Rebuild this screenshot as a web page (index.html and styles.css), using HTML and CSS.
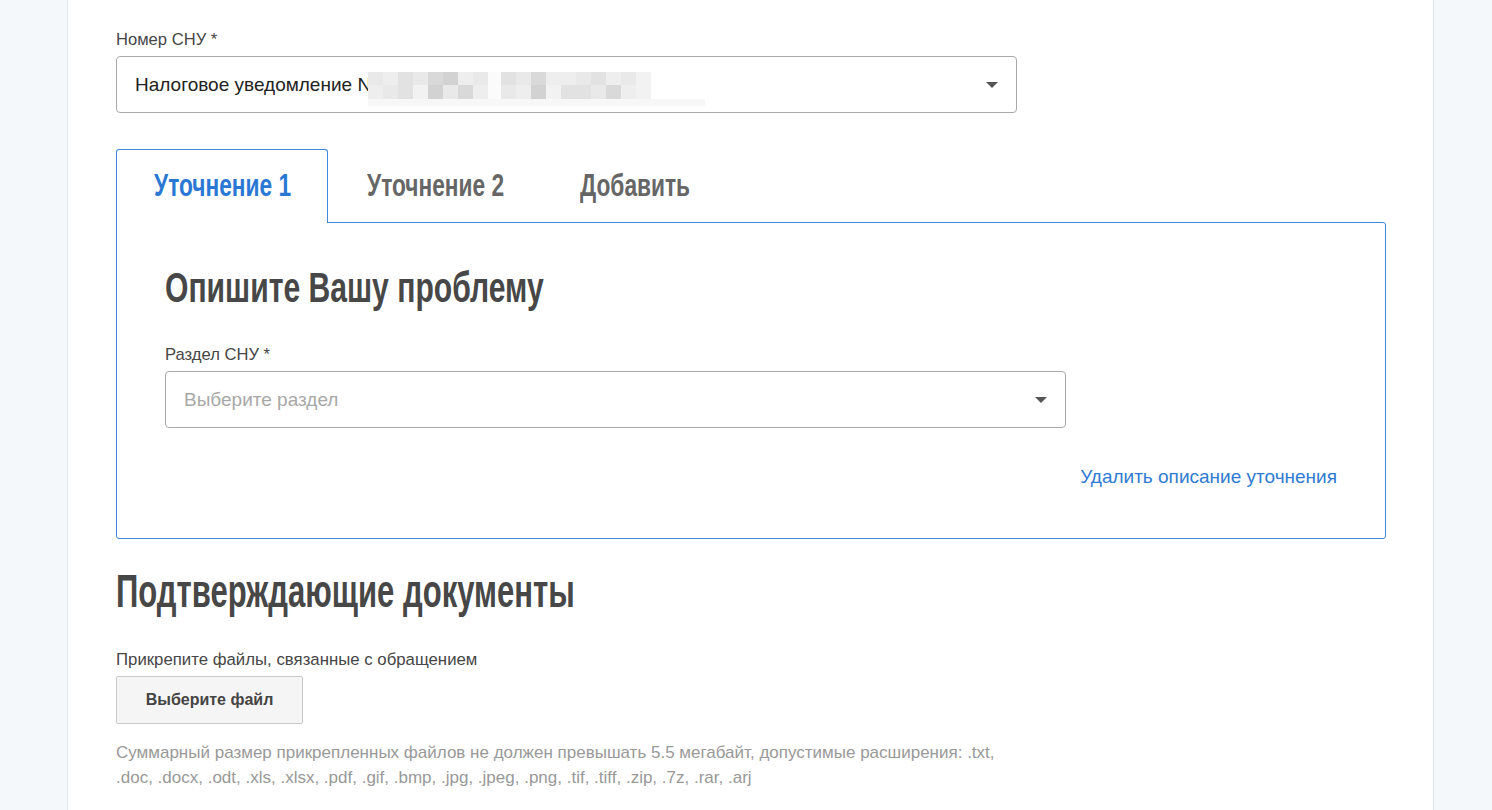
FILE: index.html
```html
<!DOCTYPE html>
<html lang="ru">
<head>
    <meta charset="UTF-8">
    <title>Уточнение СНУ</title>
    <link rel="stylesheet" href="styles.css">
</head>
<body>
    <div class="page">
        <div class="side side-left"></div>
        <div class="content">
            <div class="field">
                <label class="field-label">Номер СНУ *</label>
                <div class="select">
                    <span class="select-value">Налоговое уведомление N</span>
                    <span class="blur">
                        <span class="blur-row">
                            <i class="c1"></i><i class="c2"></i><i class="c3"></i><i class="c1"></i><i class="c4"></i><i class="c5"></i><i class="c2"></i><i class="c1"></i><i class="gap"></i><i class="c3"></i><i class="c1"></i><i class="c4"></i><i class="c2"></i><i class="c2"></i><i class="c1"></i><i class="c3"></i><i class="c2"></i><i class="c1"></i><i class="c6"></i>
                        </span>
                        <span class="blur-row">
                            <i class="c2"></i><i class="c1"></i><i class="c3"></i><i class="c6"></i><i class="c5"></i><i class="c1"></i><i class="c4"></i><i class="c2"></i><i class="gap"></i><i class="c1"></i><i class="c2"></i><i class="c5"></i><i class="c6"></i><i class="c3"></i><i class="c3"></i><i class="c1"></i><i class="c4"></i><i class="c2"></i><i class="c6"></i>
                        </span>
                        <span class="blur-fade"></span>
                    </span>
                    <span class="arrow"></span>
                </div>
            </div>

            <div class="tabs">
                <div class="tab tab-active tab-first"><span class="cond">Уточнение 1</span></div>
                <div class="tab tab-second"><span class="cond">Уточнение 2</span></div>
                <div class="tab tab-add"><span class="cond">Добавить</span></div>
            </div>
            <div class="tab-panel">
                <h2 class="panel-title"><span class="cond">Опишите Вашу проблему</span></h2>
                <div class="field">
                    <label class="field-label">Раздел СНУ *</label>
                    <div class="select">
                        <span class="select-placeholder">Выберите раздел</span>
                        <span class="arrow"></span>
                    </div>
                </div>
                <div class="panel-actions">
                    <a class="link" href="#">Удалить описание уточнения</a>
                </div>
            </div>

            <h2 class="section-title"><span class="cond">Подтверждающие документы</span></h2>
            <div class="upload">
                <div class="upload-label">Прикрепите файлы, связанные с обращением</div>
                <button class="file-button" type="button">Выберите файл</button>
                <p class="hint">Суммарный размер прикрепленных файлов не должен превышать 5.5 мегабайт, допустимые расширения: .txt, .doc, .docx, .odt, .xls, .xlsx, .pdf, .gif, .bmp, .jpg, .jpeg, .png, .tif, .tiff, .zip, .7z, .rar, .arj</p>
            </div>
        </div>
        <div class="side side-right"></div>
    </div>
</body>
</html>
```

FILE: styles.css
```css
body {
    margin: 0;
    padding: 0;
    font-family: "Liberation Sans", Arial, sans-serif;
    color: #333333;
    background-color: #f4f8fb;
}
.page {
    display: flex;
    min-height: 810px;
}
.side {
    background-color: #f4f8fb;
}
.side-left {
    width: 67px;
    border-right: 1px solid #e1e7ec;
}
.side-right {
    width: 58px;
    border-left: 1px solid #e1e7ec;
}
.content {
    flex: 1;
    background-color: #ffffff;
    padding: 30px 47px 0 48px;
}
.cond {
    display: inline-block;
    font-family: "Liberation Sans", Arial, sans-serif;
    font-weight: bold;
    transform: scaleX(0.69);
    transform-origin: left center;
    white-space: nowrap;
}
.field-label {
    display: block;
    font-size: 16.6px;
    line-height: 20px;
    color: #464646;
    margin-bottom: 6px;
}
.select {
    display: flex;
    align-items: center;
    width: 863px;
    height: 55px;
    border: 1px solid #a9a9a9;
    border-radius: 4px;
    padding: 0 18px;
}
.select-value {
    font-size: 19px;
    color: #222222;
    white-space: nowrap;
}
.select-placeholder {
    font-size: 19px;
    color: #a8a8a8;
}
.blur {
    display: flex;
    flex-direction: column;
    margin-left: -3px;
    margin-top: 9px;
}
.blur-row {
    display: flex;
}
.blur-row i {
    display: block;
    width: 15px;
    height: 13px;
}
.blur-row + .blur-row i {
    height: 14px;
}
.blur-row .c1 { background: #e9e9e9; }
.blur-row .c2 { background: #eeeeee; }
.blur-row .c3 { background: #e2e2e2; }
.blur-row .c4 { background: #d9d9d9; }
.blur-row .c5 { background: #d2d2d2; }
.blur-row .c6 { background: #f2f2f2; }
.blur-row .gap { background: #fbfbfb; width: 13px; }
.blur-fade {
    display: block;
    width: 337px;
    height: 7px;
    background: #f7f7f7;
}
.arrow {
    margin-left: auto;
    width: 0;
    height: 0;
    border-left: 6px solid transparent;
    border-right: 6px solid transparent;
    border-top: 6px solid #555555;
}
.tabs {
    display: flex;
    margin-top: 36px;
}
.tab {
    box-sizing: border-box;
    font-size: 32px;
    color: #666666;
    padding-left: 37px;
    height: 73px;
    line-height: 71px;
    border: 1px solid transparent;
    border-bottom: none;
}
.tab .cond {
    transform: scaleX(0.71);
}
.tab-first {
    width: 212px;
}
.tab-second {
    width: 214px;
    padding-left: 38px;
}
.tab-add {
    width: 184px;
}
.tab-active {
    color: #2b78d4;
    border-color: #3f87d9;
    border-radius: 3px 3px 0 0;
    background-color: #ffffff;
    position: relative;
    z-index: 1;
    height: 74px;
    margin-bottom: -1px;
}
.tab-panel {
    border: 1px solid #3f87d9;
    border-radius: 0 3px 3px 3px;
    padding: 40px 48px 50px 48px;
}
.panel-title {
    font-size: 43px;
    line-height: 48px;
    color: #474747;
    margin: 0 0 34px 0;
}
.panel-title .cond {
    transform: scaleX(0.70);
}
.panel-actions {
    display: flex;
    justify-content: flex-end;
    margin-top: 38px;
}
.link {
    font-size: 19px;
    color: #2f7bd3;
    text-decoration: none;
}
.section-title {
    font-size: 46px;
    line-height: 52px;
    color: #474747;
    margin: 26px 0 33px 0;
}
.section-title .cond {
    transform: scaleX(0.675);
}
.upload-label {
    font-size: 16.8px;
    line-height: 20px;
    color: #464646;
    margin-bottom: 6px;
}
.file-button {
    font-family: "Liberation Sans", Arial, sans-serif;
    font-weight: bold;
    font-size: 16px;
    color: #444444;
    background-color: #f5f5f5;
    border: 1px solid #c9c9c9;
    border-radius: 2px;
    width: 187px;
    height: 48px;
    cursor: pointer;
}
.hint {
    font-size: 17px;
    line-height: 25px;
    color: #999999;
    width: 885px;
    margin: 16px 0 0 0;
}
```
